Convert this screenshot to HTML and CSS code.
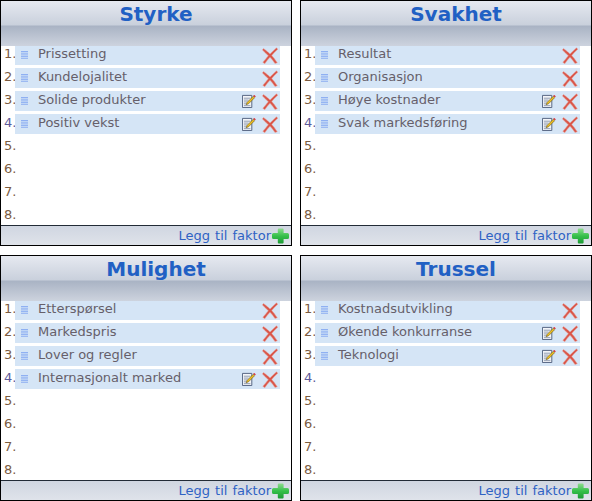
FILE: index.html
```html
<!DOCTYPE html>
<html lang="no">
<head>
<meta charset="utf-8">
<title>SWOT</title>
<link rel="stylesheet" href="styles.css">
</head>
<body>
<svg class="defs" width="0" height="0" aria-hidden="true">
  <symbol id="drag" viewBox="0 0 7 8">
    <path d="M0 .5h7M0 2.200h7M0 3.900h7M0 5.600h7M0 7.300h7" stroke="#8fb0f2" stroke-width="1"/>
  </symbol>
  <symbol id="del" viewBox="0 0 16 17">
    <path d="M1.500 1.500C5 4 6.500 5.500 8 7C10 5 12 3 14.500 .8L15.800 2.300C13 4.800 11.500 6.300 9.800 8.600C11.500 10.600 13.500 13 15.300 15.800L13 16.600C11.500 14.300 10 12.300 8 10.300C6 12.300 4.500 14.300 2.800 16.700L.8 15.300C3 12.800 4.500 11 6.300 8.800C4.500 7 2.500 4.800 .4 2.900Z" fill="#d9564a" stroke="#eba79c" stroke-width=".5"/>
  </symbol>
  <symbol id="edit" viewBox="0 0 15 15">
    <path d="M.5 1.500h10v13h-10z" fill="#f2f4f8" stroke="#4f5f7d"/>
    <path d="M2 4.500h7M2 6.500h5M2 8.500h4M2 10.500h3M2 12.500h7" stroke="#8c98ac"/>
    <path d="M4.500 11.500L5.500 9L12 2.500L13.500 4L7 10.500Z" fill="#f0c020" stroke="#5a4a10" stroke-width=".6"/>
    <path d="M12 2L13 1L14.800 2.500L13.800 3.500Z" fill="#d8232a"/>
  </symbol>
  <symbol id="plus" viewBox="0 0 17 16">
    <path d="M6.800 .5h3.800q1 0 1 1V5h3.900q1.500 0 1.500 1.500v3q0 1.500-1.500 1.500h-3.900v3.500q0 1-1 1H6.800q-1 0-1-1V11H1.500Q0 11 0 9.500v-3Q0 5 1.500 5h4.300V1.500q0-1 1-1z" fill="url(#plusfill)"/>
    <linearGradient id="plusfill" x1="0" y1="0" x2="0" y2="1">
      <stop offset="0" stop-color="#8fdc8f"/>
      <stop offset=".5" stop-color="#35c04a"/>
      <stop offset="1" stop-color="#1e9a35"/>
    </linearGradient>
  </symbol>
</svg>
<main class="board">
  <section class="panel">
    <h2 class="title">Styrke</h2>
    <ol class="list">
      <li class="slot"><span class="num">1.</span><div class="row"><svg class="drag"><use href="#drag"/></svg><span class="label">Prissetting</span><svg class="del"><use href="#del"/></svg></div></li>
      <li class="slot"><span class="num">2.</span><div class="row"><svg class="drag"><use href="#drag"/></svg><span class="label">Kundelojalitet</span><svg class="del"><use href="#del"/></svg></div></li>
      <li class="slot"><span class="num">3.</span><div class="row"><svg class="drag"><use href="#drag"/></svg><span class="label">Solide produkter</span><svg class="edit"><use href="#edit"/></svg><svg class="del"><use href="#del"/></svg></div></li>
      <li class="slot"><span class="num num-alt">4.</span><div class="row"><svg class="drag"><use href="#drag"/></svg><span class="label">Positiv vekst</span><svg class="edit"><use href="#edit"/></svg><svg class="del"><use href="#del"/></svg></div></li>
      <li class="slot"><span class="num">5.</span></li>
      <li class="slot"><span class="num">6.</span></li>
      <li class="slot"><span class="num">7.</span></li>
      <li class="slot"><span class="num">8.</span></li>
    </ol>
    <footer class="foot"><span class="add">Legg til faktor</span><svg class="plus"><use href="#plus"/></svg></footer>
  </section>
  <section class="panel">
    <h2 class="title">Svakhet</h2>
    <ol class="list">
      <li class="slot"><span class="num">1.</span><div class="row"><svg class="drag"><use href="#drag"/></svg><span class="label">Resultat</span><svg class="del"><use href="#del"/></svg></div></li>
      <li class="slot"><span class="num">2.</span><div class="row"><svg class="drag"><use href="#drag"/></svg><span class="label">Organisasjon</span><svg class="del"><use href="#del"/></svg></div></li>
      <li class="slot"><span class="num">3.</span><div class="row"><svg class="drag"><use href="#drag"/></svg><span class="label">Høye kostnader</span><svg class="edit"><use href="#edit"/></svg><svg class="del"><use href="#del"/></svg></div></li>
      <li class="slot"><span class="num num-alt">4.</span><div class="row"><svg class="drag"><use href="#drag"/></svg><span class="label">Svak markedsføring</span><svg class="edit"><use href="#edit"/></svg><svg class="del"><use href="#del"/></svg></div></li>
      <li class="slot"><span class="num">5.</span></li>
      <li class="slot"><span class="num">6.</span></li>
      <li class="slot"><span class="num">7.</span></li>
      <li class="slot"><span class="num">8.</span></li>
    </ol>
    <footer class="foot"><span class="add">Legg til faktor</span><svg class="plus"><use href="#plus"/></svg></footer>
  </section>
  <section class="panel">
    <h2 class="title">Mulighet</h2>
    <ol class="list">
      <li class="slot"><span class="num">1.</span><div class="row"><svg class="drag"><use href="#drag"/></svg><span class="label">Etterspørsel</span><svg class="del"><use href="#del"/></svg></div></li>
      <li class="slot"><span class="num">2.</span><div class="row"><svg class="drag"><use href="#drag"/></svg><span class="label">Markedspris</span><svg class="del"><use href="#del"/></svg></div></li>
      <li class="slot"><span class="num">3.</span><div class="row"><svg class="drag"><use href="#drag"/></svg><span class="label">Lover og regler</span><svg class="del"><use href="#del"/></svg></div></li>
      <li class="slot"><span class="num num-alt">4.</span><div class="row"><svg class="drag"><use href="#drag"/></svg><span class="label">Internasjonalt marked</span><svg class="edit"><use href="#edit"/></svg><svg class="del"><use href="#del"/></svg></div></li>
      <li class="slot"><span class="num">5.</span></li>
      <li class="slot"><span class="num">6.</span></li>
      <li class="slot"><span class="num">7.</span></li>
      <li class="slot"><span class="num">8.</span></li>
    </ol>
    <footer class="foot"><span class="add">Legg til faktor</span><svg class="plus"><use href="#plus"/></svg></footer>
  </section>
  <section class="panel">
    <h2 class="title">Trussel</h2>
    <ol class="list">
      <li class="slot"><span class="num">1.</span><div class="row"><svg class="drag"><use href="#drag"/></svg><span class="label">Kostnadsutvikling</span><svg class="del"><use href="#del"/></svg></div></li>
      <li class="slot"><span class="num">2.</span><div class="row"><svg class="drag"><use href="#drag"/></svg><span class="label">Økende konkurranse</span><svg class="edit"><use href="#edit"/></svg><svg class="del"><use href="#del"/></svg></div></li>
      <li class="slot"><span class="num">3.</span><div class="row"><svg class="drag"><use href="#drag"/></svg><span class="label">Teknologi</span><svg class="edit"><use href="#edit"/></svg><svg class="del"><use href="#del"/></svg></div></li>
      <li class="slot"><span class="num num-alt">4.</span></li>
      <li class="slot"><span class="num">5.</span></li>
      <li class="slot"><span class="num">6.</span></li>
      <li class="slot"><span class="num">7.</span></li>
      <li class="slot"><span class="num">8.</span></li>
    </ol>
    <footer class="foot"><span class="add">Legg til faktor</span><svg class="plus"><use href="#plus"/></svg></footer>
  </section>
</main>
</body>
</html>
```
FILE: styles.css
```css
* { box-sizing: border-box; }
html, body { margin: 0; padding: 0; background: #fff; }
body { font-family: "DejaVu Sans", Verdana, sans-serif; overflow: hidden; }
.defs { position: absolute; }
.board {
  width: 592px;
  height: 501px;
  display: grid;
  grid-template-columns: 292px 292px;
  grid-template-rows: 246px 246px;
  column-gap: 8px;
  row-gap: 9px;
}
.panel {
  border: 1px solid #000;
  display: flex;
  flex-direction: column;
  background: #fff;
  min-height: 0;
}
.title {
  flex: none;
  position: relative;
  z-index: 1;
  margin: 0;
  height: 45px;
  padding-left: 20px;
  text-align: center;
  font-size: 20px;
  line-height: 26px;
  font-weight: bold;
  color: #2160c4;
  background: linear-gradient(#e6e9f0 0, #c9d0dc 24px, #a9b3c4 25px, #cdd3de 45px);
}
.list {
  list-style: none;
  margin: -1px 0 0;
  padding: 0 0 0 3px;
  flex: 1;
  min-height: 0;
}
.slot {
  height: 23px;
  display: flex;
  align-items: flex-start;
  font-size: 13px;
}
.num {
  width: 11px;
  line-height: 17px;
  color: #7b5b3f;
}
.num-alt { color: #5a5a9a; }
.row {
  width: 265px;
  height: 20px;
  display: flex;
  align-items: center;
  background: #d5e5f6;
  color: #665f6a;
}
.drag { width: 7px; height: 8px; margin-left: 6px; flex: none; }
.label { margin-left: 10px; flex: 1; line-height: 17px; align-self: flex-start; }
.edit { width: 14px; height: 14px; margin-right: 6px; flex: none; }
.del { width: 16px; height: 17px; margin-right: 2px; flex: none; margin-top: 1px; }
.foot {
  flex: none;
  height: 20px;
  border-top: 1px solid #222b36;
  display: flex;
  justify-content: flex-end;
  align-items: center;
  padding-right: 2px;
  background: linear-gradient(#d0d6e1, #dfe3ea);
}
.add { font-size: 13px; color: #2f62c4; word-spacing: 1px; }
.plus { width: 17px; height: 16px; flex: none; margin-left: 1px; }
```
